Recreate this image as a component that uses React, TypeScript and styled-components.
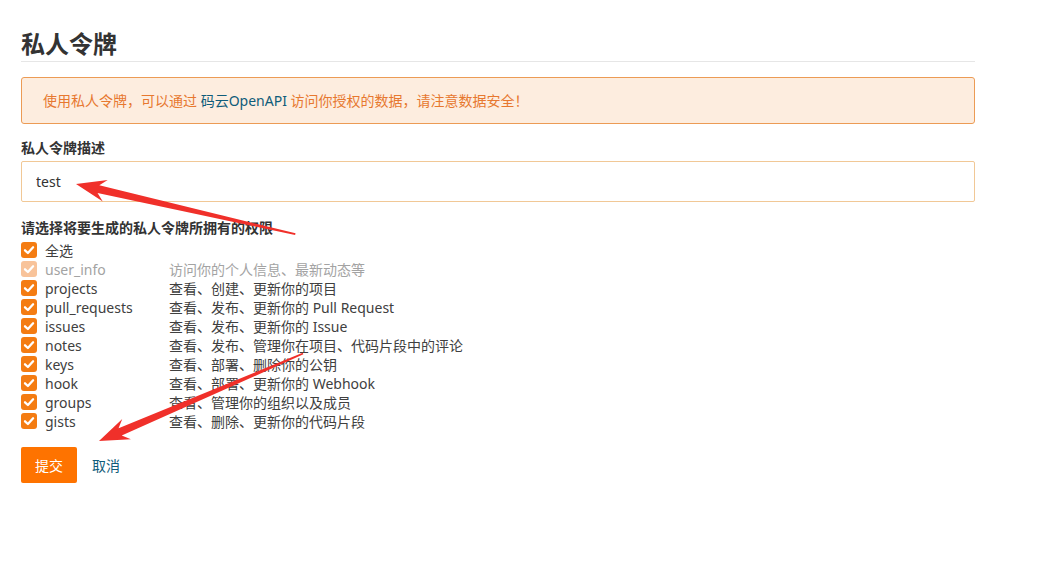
import styled, { createGlobalStyle } from "styled-components";

const GlobalStyle = createGlobalStyle`
  body {
    margin: 0;
    background: #fff;
    font-family: "Noto Sans", "Noto Sans CJK SC", sans-serif;
    color: #404040;
  }
`;

const StyledPage = styled.div`
  position: relative;
  width: 954px;
  padding: 27px 0 60px 21px;
`;

const StyledTitle = styled.h1`
  margin: 0;
  font-size: 24px;
  line-height: 34px;
  font-weight: 700;
  color: #333;
  border-bottom: 1px solid #e6e6e6;
`;

const StyledAlert = styled.div`
  margin-top: 15px;
  height: 45px;
  line-height: 45px;
  padding: 0 21px;
  background: #fdeddf;
  border: 1px solid #ec9b55;
  border-radius: 3px;
  color: #e7782f;
  font-size: 14px;
`;

const StyledAlertLink = styled.span`
  color: #0f5c7a;
`;

const StyledLabel = styled.div<{ $top: number }>`
  margin-top: ${(p) => p.$top}px;
  font-size: 14px;
  line-height: 20px;
  font-weight: 700;
  color: #333;
`;

const StyledInput = styled.input`
  display: block;
  box-sizing: border-box;
  width: 100%;
  height: 41px;
  margin-top: 3px;
  padding: 0 14px;
  border: 1px solid #f1c896;
  border-radius: 2px;
  font-family: inherit;
  font-size: 14px;
  color: #333;
  outline: none;
`;

const StyledList = styled.div`
  margin-top: 2px;
  display: flex;
  flex-direction: column;
`;

const StyledRow = styled.div<{ $muted?: boolean }>`
  display: grid;
  grid-template-columns: 16px 116px 1fr;
  column-gap: 8px;
  align-items: center;
  height: 19px;
  font-size: 14px;
  color: ${(p) => (p.$muted ? "#a3a3a3" : "#404040")};
`;

const StyledBox = styled.span<{ $muted?: boolean }>`
  display: flex;
  width: 16px;
  height: 16px;
  border-radius: 3px;
  background: ${(p) => (p.$muted ? "#f8c39a" : "#f47c12")};
`;

const StyledActions = styled.div`
  margin-top: 17px;
  display: flex;
  align-items: center;
  gap: 15px;
`;

const StyledSubmit = styled.button`
  width: 56px;
  height: 36px;
  border: none;
  border-radius: 2px;
  background: #fe7300;
  color: #fff;
  font-family: inherit;
  font-size: 14px;
  cursor: pointer;
`;

const StyledCancel = styled.a`
  color: #0f5c7a;
  font-size: 14px;
  text-decoration: none;
  cursor: pointer;
`;

const StyledOverlay = styled.svg`
  position: absolute;
  left: 0;
  top: 0;
  pointer-events: none;
`;

const perms = [
  { name: "user_info", desc: "访问你的个人信息、最新动态等", muted: true },
  { name: "projects", desc: "查看、创建、更新你的项目" },
  { name: "pull_requests", desc: "查看、发布、更新你的 Pull Request" },
  { name: "issues", desc: "查看、发布、更新你的 Issue" },
  { name: "notes", desc: "查看、发布、管理你在项目、代码片段中的评论" },
  { name: "keys", desc: "查看、部署、删除你的公钥" },
  { name: "hook", desc: "查看、部署、更新你的 Webhook" },
  { name: "groups", desc: "查看、管理你的组织以及成员" },
  { name: "gists", desc: "查看、删除、更新你的代码片段" },
];

const Check = ({ muted }: { muted?: boolean }) => (
  <StyledBox $muted={muted}>
    <svg width="16" height="16" viewBox="0 0 16 16">
      <path
        d="M4 8.3 L6.9 11 L12.1 5.3"
        fill="none"
        stroke="#fff"
        strokeWidth="2.3"
        strokeLinecap="round"
        strokeLinejoin="round"
      />
    </svg>
  </StyledBox>
);

// red annotation arrow, tip at origin, tail along +x
const Arrow = ({ x, y, angle, length }: { x: number; y: number; angle: number; length: number }) => (
  <g transform={`translate(${x},${y}) rotate(${angle})`}>
    <polygon
      points={`0,0 30,-11 23,-4 ${length},-0.9 ${length},0.9 23,4 30,11`}
      fill="#f0302a"
    />
  </g>
);

export default function App() {
  return (
    <>
      <GlobalStyle />
      <StyledPage>
        <StyledTitle>私人令牌</StyledTitle>
        <StyledAlert>
          使用私人令牌，可以通过 <StyledAlertLink>码云OpenAPI</StyledAlertLink> 访问你授权的数据，请注意数据安全！
        </StyledAlert>

        <StyledLabel $top={14}>私人令牌描述</StyledLabel>
        <StyledInput defaultValue="test" />

        <StyledLabel $top={16}>请选择将要生成的私人令牌所拥有的权限</StyledLabel>
        <StyledList>
          <StyledRow>
            <Check />
            <span>全选</span>
            <span />
          </StyledRow>
          {perms.map((p) => (
            <StyledRow key={p.name} $muted={p.muted}>
              <Check muted={p.muted} />
              <span>{p.name}</span>
              <span>{p.desc}</span>
            </StyledRow>
          ))}
        </StyledList>

        <StyledActions>
          <StyledSubmit>提交</StyledSubmit>
          <StyledCancel>取消</StyledCancel>
        </StyledActions>
      </StyledPage>

      <StyledOverlay width="1041" height="563">
        <Arrow x={76} y={184} angle={12.9} length={225} />
        <Arrow x={99} y={441} angle={-23.2} length={222} />
      </StyledOverlay>
    </>
  );
}
